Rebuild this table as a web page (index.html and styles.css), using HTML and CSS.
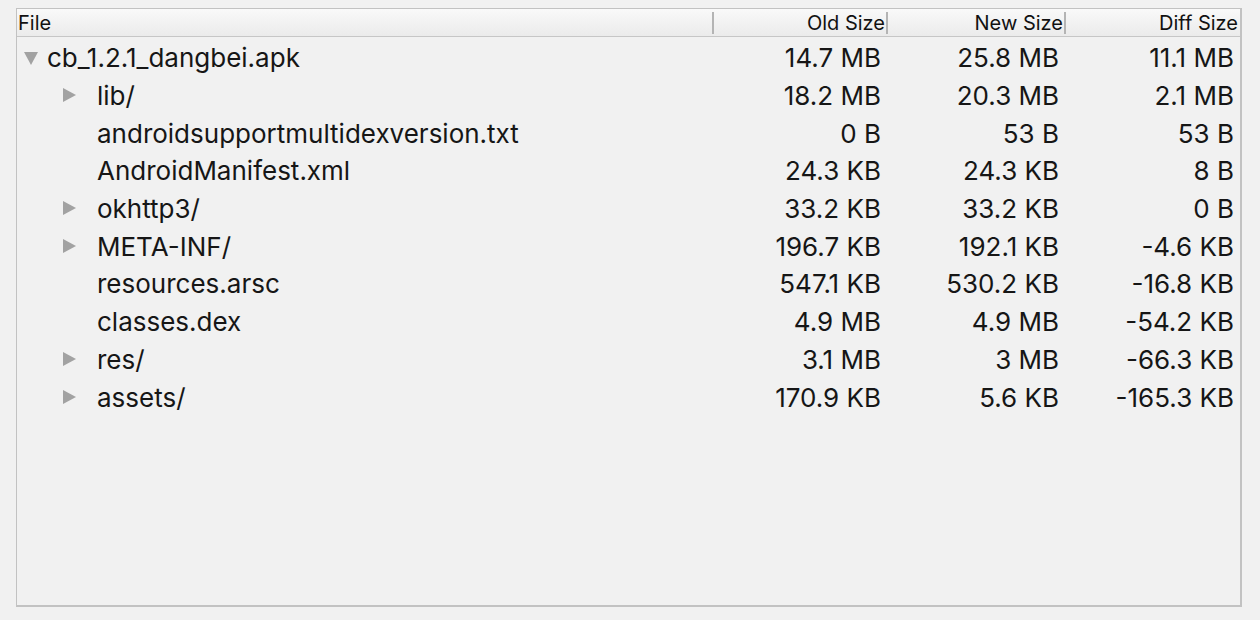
FILE: index.html
```html
<!DOCTYPE html>
<html>
<head>
<meta charset="utf-8">
<link rel="stylesheet" href="styles.css">
</head>
<body>
<div class="panel">
  <div class="head">
    <div class="hcell first"><span>File</span><i class="sep"></i></div>
    <div class="hcell"><span>Old Size</span><i class="sep"></i></div>
    <div class="hcell"><span>New Size</span><i class="sep"></i></div>
    <div class="hcell last"><span>Diff Size</span></div>
  </div>
  <div class="tree">
    <div class="row">
      <div class="name lvl0"><span class="tw down"></span><span>cb_1.2.1_dangbei.apk</span></div>
      <div class="num">14.7 MB</div><div class="num">25.8 MB</div><div class="num">11.1 MB</div>
    </div>
    <div class="row">
      <div class="name lvl1"><span class="tw right"></span><span>lib/</span></div>
      <div class="num">18.2 MB</div><div class="num">20.3 MB</div><div class="num">2.1 MB</div>
    </div>
    <div class="row">
      <div class="name lvl1"><span class="tw none"></span><span>androidsupportmultidexversion.txt</span></div>
      <div class="num">0 B</div><div class="num">53 B</div><div class="num">53 B</div>
    </div>
    <div class="row">
      <div class="name lvl1"><span class="tw none"></span><span>AndroidManifest.xml</span></div>
      <div class="num">24.3 KB</div><div class="num">24.3 KB</div><div class="num">8 B</div>
    </div>
    <div class="row">
      <div class="name lvl1"><span class="tw right"></span><span>okhttp3/</span></div>
      <div class="num">33.2 KB</div><div class="num">33.2 KB</div><div class="num">0 B</div>
    </div>
    <div class="row">
      <div class="name lvl1"><span class="tw right"></span><span>META-INF/</span></div>
      <div class="num">196.7 KB</div><div class="num">192.1 KB</div><div class="num">-4.6 KB</div>
    </div>
    <div class="row">
      <div class="name lvl1"><span class="tw none"></span><span>resources.arsc</span></div>
      <div class="num">547.1 KB</div><div class="num">530.2 KB</div><div class="num">-16.8 KB</div>
    </div>
    <div class="row">
      <div class="name lvl1"><span class="tw none"></span><span>classes.dex</span></div>
      <div class="num">4.9 MB</div><div class="num">4.9 MB</div><div class="num">-54.2 KB</div>
    </div>
    <div class="row">
      <div class="name lvl1"><span class="tw right"></span><span>res/</span></div>
      <div class="num">3.1 MB</div><div class="num">3 MB</div><div class="num">-66.3 KB</div>
    </div>
    <div class="row">
      <div class="name lvl1"><span class="tw right"></span><span>assets/</span></div>
      <div class="num">170.9 KB</div><div class="num">5.6 KB</div><div class="num">-165.3 KB</div>
    </div>
  </div>
</div>
</body>
</html>
```
FILE: styles.css
```css
html, body {
  margin: 0;
  padding: 0;
  background: #f1f1f1;
}
body {
  padding: 8px 0 0 16px;
  font-family: "Inter", "Liberation Sans", sans-serif;
  color: #161616;
}
.panel {
  width: 1223px;
  height: 596px;
  border-top: 1px solid #c2c2c2;
  border-left: 1px solid #c2c2c2;
  border-right: 2px solid #c2c2c2;
  border-bottom: 2px solid #c2c2c2;
  background: #f1f1f1;
  display: flex;
  flex-direction: column;
}
.head {
  display: grid;
  grid-template-columns: 697px 174px 178px 1fr;
  height: 27px;
  border-bottom: 1px solid #c6c6c6;
  background: linear-gradient(#f9f9f9, #ebebeb);
  font-size: 20px;
  color: #111;
}
.hcell {
  display: flex;
  align-items: center;
  justify-content: flex-end;
}
.hcell.first {
  justify-content: space-between;
  padding-left: 1px;
}
.hcell.last {
  padding-right: 2px;
}
.sep {
  display: block;
  width: 2px;
  height: 22px;
  background: #b4b4b4;
  margin-left: 1px;
}
.tree {
  padding-top: 2px;
  font-size: 26px;
}
.row {
  display: grid;
  grid-template-columns: 697px 174px 178px 1fr;
  height: 37.7px;
  align-items: center;
}
.name {
  display: flex;
  align-items: center;
}
.lvl0 { padding-left: 7px; }
.lvl1 { padding-left: 45px; }
.tw {
  display: block;
  width: 15px;
  height: 15px;
  flex: none;
  margin-right: 8px;
  position: relative;
}
.lvl1 .tw { margin-right: 20px; }
.tw.down::before {
  content: "";
  position: absolute;
  left: 0;
  top: 2px;
  border-left: 7.5px solid transparent;
  border-right: 7.5px solid transparent;
  border-top: 13px solid #a2a2a2;
}
.tw.right::before {
  content: "";
  position: absolute;
  left: 1px;
  top: 0;
  border-top: 7.5px solid transparent;
  border-bottom: 7.5px solid transparent;
  border-left: 13px solid #a2a2a2;
}
.num {
  text-align: right;
  padding-right: 7px;
}
.row .num:last-child {
  padding-right: 6px;
}
```
